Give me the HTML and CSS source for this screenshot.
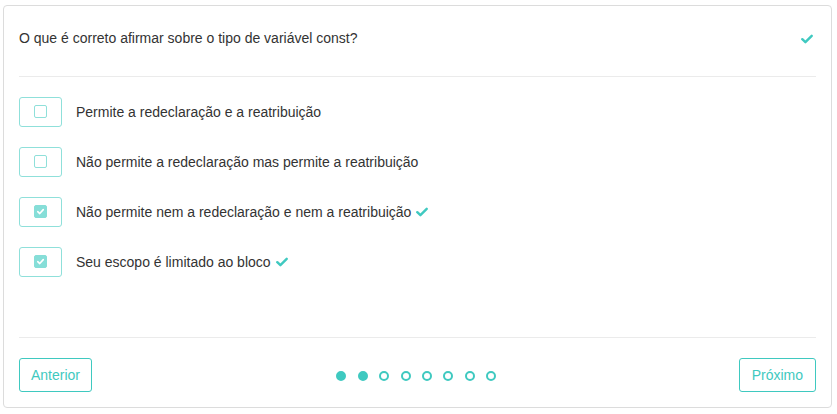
FILE: index.html
```html
<!DOCTYPE html>
<html lang="pt">
<head>
<meta charset="utf-8">
<link rel="stylesheet" href="styles.css">
</head>
<body>
<div class="card">
  <div class="header">
    <span class="question">O que é correto afirmar sobre o tipo de variável const?</span>
    <svg class="check check-head" viewBox="0 0 12 10"><path d="M1.3 5.2 L4.4 8.2 L10.7 1.8" /></svg>
  </div>
  <div class="options">
    <div class="option">
      <span class="box"><span class="sq"></span></span>
      <span class="label">Permite a redeclaração e a reatribuição</span>
    </div>
    <div class="option">
      <span class="box"><span class="sq"></span></span>
      <span class="label">Não permite a redeclaração mas permite a reatribuição</span>
    </div>
    <div class="option">
      <span class="box"><span class="sq on"><svg viewBox="0 0 12 12"><path d="M3 6.2 L5.2 8.2 L9 4" /></svg></span></span>
      <span class="label">Não permite nem a redeclaração e nem a reatribuição</span>
      <svg class="check" viewBox="0 0 12 10"><path d="M1.3 5.2 L4.4 8.2 L10.7 1.8" /></svg>
    </div>
    <div class="option">
      <span class="box"><span class="sq on"><svg viewBox="0 0 12 12"><path d="M3 6.2 L5.2 8.2 L9 4" /></svg></span></span>
      <span class="label">Seu escopo é limitado ao bloco</span>
      <svg class="check" viewBox="0 0 12 10"><path d="M1.3 5.2 L4.4 8.2 L10.7 1.8" /></svg>
    </div>
  </div>
  <div class="footer">
    <button class="btn">Anterior</button>
    <div class="dots">
      <span class="dot full"></span>
      <span class="dot full"></span>
      <span class="dot"></span>
      <span class="dot"></span>
      <span class="dot"></span>
      <span class="dot"></span>
      <span class="dot"></span>
      <span class="dot"></span>
    </div>
    <button class="btn btn-next">Próximo</button>
  </div>
</div>
</body>
</html>
```
FILE: styles.css
```css
* { box-sizing: border-box; }
html, body { margin: 0; padding: 0; background: #fff; }
body {
  font-family: "Liberation Sans", Arial, sans-serif;
  font-size: 14px;
  color: #333;
  padding: 5px 0 0 3px;
}
.card {
  width: 829px;
  height: 403px;
  border: 1px solid #dcdcdc;
  border-radius: 4px;
  padding: 0 15px;
  display: flex;
  flex-direction: column;
}
.header {
  height: 71px;
  border-bottom: 1px solid #ebebeb;
  display: flex;
  align-items: center;
  justify-content: space-between;
  padding-bottom: 6px;
  padding-right: 3px;
}
.check {
  width: 12px;
  height: 10px;
  margin-left: 5px;
  flex: none;
}
.check path {
  fill: none;
  stroke: #3fc9c0;
  stroke-width: 2.4;
  stroke-linecap: round;
  stroke-linejoin: round;
}
.check-head { margin-top: 1px; }
.options {
  flex: 1;
  padding-top: 20px;
  display: flex;
  flex-direction: column;
  gap: 21px;
}
.option {
  display: flex;
  align-items: center;
  height: 29px;
}
.box {
  width: 43px;
  height: 30px;
  border: 1px solid #8fe0da;
  border-radius: 3px;
  display: flex;
  align-items: center;
  justify-content: center;
  margin-right: 14px;
  flex: none;
}
.sq {
  width: 13px;
  height: 13px;
  border: 1.5px solid #8fe0da;
  border-radius: 2px;
  display: flex;
}
.sq.on {
  background: #86ded8;
  border-color: #86ded8;
}
.sq svg { width: 100%; height: 100%; }
.sq svg path {
  fill: none;
  stroke: #fff;
  stroke-width: 1.8;
  stroke-linecap: round;
  stroke-linejoin: round;
}
.footer {
  border-top: 1px solid #ebebeb;
  padding: 20px 0 15px;
  display: flex;
  align-items: center;
  justify-content: space-between;
}
.btn {
  height: 34px;
  padding: 0 11px;
  border: 1px solid #3fc9c0;
  border-radius: 3px;
  background: #fff;
  color: #3fc9c0;
  font-family: "Liberation Sans", Arial, sans-serif;
  font-size: 14px;
}
.btn-next { padding: 0 12px; }
.dots {
  display: flex;
  gap: 11.4px;
  margin-top: 1px;
  margin-left: 2px;
}
.dot {
  width: 10px;
  height: 10px;
  border-radius: 50%;
  border: 2px solid #3fc9c0;
}
.dot.full { background: #3fc9c0; }
```
